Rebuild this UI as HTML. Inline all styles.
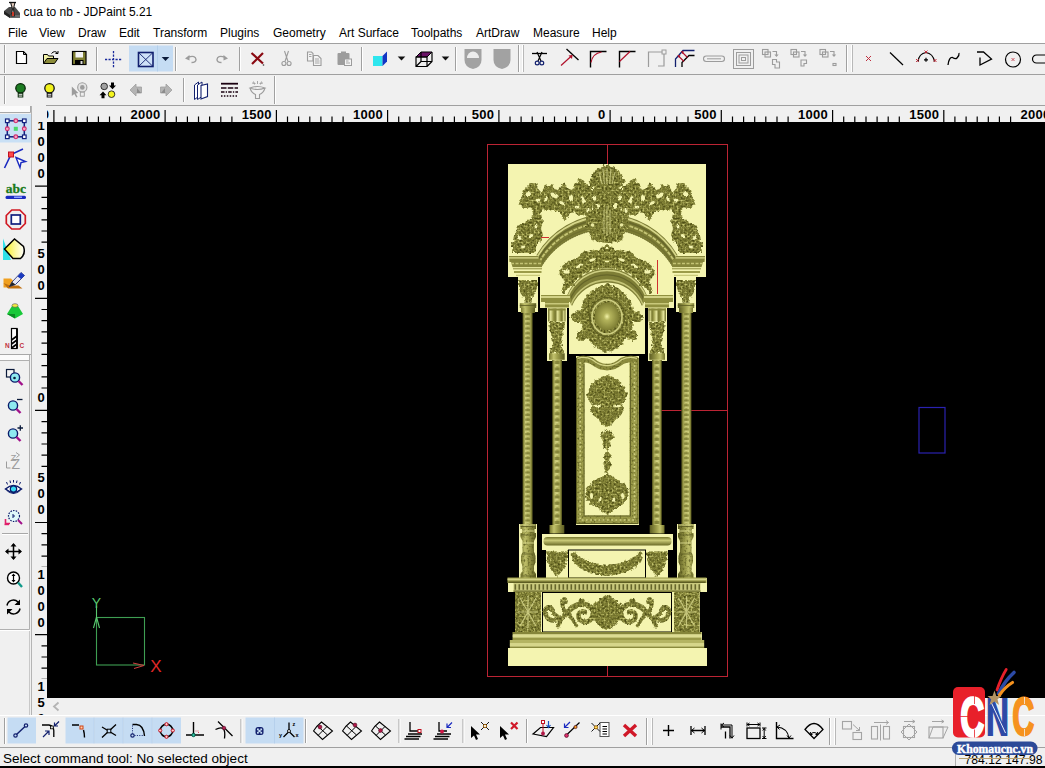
<!DOCTYPE html>
<html><head><meta charset="utf-8"><title>cua to nb - JDPaint 5.21</title>
<style>
html,body{margin:0;padding:0;}
body{width:1045px;height:768px;overflow:hidden;background:#f0f0f0;position:relative;font-family:"Liberation Sans",sans-serif;color:#000;}
.abs{position:absolute;}
#title{left:0;top:0;width:1045px;height:22px;background:#fff;}
#title span{position:absolute;left:23.500px;top:5px;font-size:12px;line-height:14px;white-space:nowrap;}
#menu{left:0;top:22px;width:1045px;height:21px;background:#fff;}
#menu span{position:absolute;top:4px;font-size:12px;line-height:14px;white-space:nowrap;}
#tb1{left:0;top:43px;width:1045px;height:31px;background:#f0f0f0;border-top:1px solid #a0a0a0;box-sizing:border-box;}
#tb2{left:0;top:74px;width:1045px;height:31px;background:#f0f0f0;border-top:1px solid #a0a0a0;box-sizing:border-box;}
#hr{left:46px;top:105px;width:999px;height:17px;background:#f0f0f0;border-top:1px solid #a0a0a0;box-sizing:border-box;}
#vr{left:31px;top:105px;width:16px;height:610px;background:#f0f0f0;}
#left{left:0;top:105px;width:31px;height:610px;background:#f0f0f0;}
#canvas{left:47px;top:122px;width:998px;height:576px;background:#000;}
#hs{left:47px;top:698px;width:998px;height:17px;background:#f0f0f0;}
#tb3{left:0;top:715px;width:1045px;height:32px;background:#f0f0f0;border-top:1px solid #fff;box-sizing:border-box;}
#status{left:0;top:747px;width:1045px;height:21px;background:#f0f0f0;border-top:1px solid #a0a0a0;box-sizing:border-box;}
.rl{position:absolute;top:1px;height:16px;background:#f0f0f0;padding-left:1px;font-weight:bold;font-size:13px;line-height:15px;letter-spacing:0.3px;white-space:nowrap;}
.rv{position:absolute;left:4px;width:12px;background:#f0f0f0;text-align:center;font-weight:bold;font-size:13px;line-height:15px;}
svg{position:absolute;left:0;top:0;overflow:visible;}
</style></head><body>
<div id="title" class="abs"><span>cua to nb - JDPaint 5.21</span></div>
<div id="menu" class="abs">
<span style="left:8px">File</span><span style="left:39px">View</span><span style="left:78px">Draw</span><span style="left:119px">Edit</span><span style="left:153px">Transform</span><span style="left:220px">Plugins</span><span style="left:273px">Geometry</span><span style="left:339px">Art Surface</span><span style="left:411px">Toolpaths</span><span style="left:476px">ArtDraw</span><span style="left:533px">Measure</span><span style="left:592px">Help</span>
</div>
<div id="tb1" class="abs"></div>
<div id="tb2" class="abs"></div>
<div id="left" class="abs"></div>
<div id="vr" class="abs"></div>
<div id="hr" class="abs"></div>
<div id="canvas" class="abs"></div>
<div id="hs" class="abs"></div>
<div id="tb3" class="abs"></div>
<div id="status" class="abs"></div>
<svg id="art" width="1045" height="768" viewBox="0 0 1045 768">
<defs>
<filter id="carve" x="-5%" y="-5%" width="110%" height="110%" color-interpolation-filters="sRGB">
<feTurbulence type="fractalNoise" baseFrequency="0.45" numOctaves="2" seed="7" result="n"/>
<feColorMatrix in="n" type="matrix" values="0 0 0 0 0.30  0 0 0 0 0.30  0 0 0 0 0.08  2.6 0 0 0 -1.05" result="dk"/>
<feComposite in="dk" in2="SourceAlpha" operator="in" result="d2"/>
<feColorMatrix in="n" type="matrix" values="0 0 0 0 0.86  0 0 0 0 0.86  0 0 0 0 0.52  0 2.6 0 0 -1.3" result="lt"/>
<feComposite in="lt" in2="SourceAlpha" operator="in" result="l2"/>
<feMerge><feMergeNode in="SourceGraphic"/><feMergeNode in="d2"/><feMergeNode in="l2"/></feMerge>
</filter>
<filter id="rag" x="-10%" y="-10%" width="120%" height="120%" color-interpolation-filters="sRGB">
<feTurbulence type="fractalNoise" baseFrequency="0.3" numOctaves="2" seed="11" result="t"/>
<feDisplacementMap in="SourceGraphic" in2="t" scale="5" xChannelSelector="R" yChannelSelector="G" result="disp"/>
<feTurbulence type="fractalNoise" baseFrequency="0.5" numOctaves="2" seed="5" result="n"/>
<feColorMatrix in="n" type="matrix" values="0 0 0 0 0.30  0 0 0 0 0.30  0 0 0 0 0.08  2.8 0 0 0 -1.1" result="dk"/>
<feComposite in="dk" in2="disp" operator="in" result="d2"/>
<feColorMatrix in="n" type="matrix" values="0 0 0 0 0.84  0 0 0 0 0.84  0 0 0 0 0.50  0 2.8 0 0 -1.4" result="lt"/>
<feComposite in="lt" in2="disp" operator="in" result="l2"/>
<feMerge><feMergeNode in="disp"/><feMergeNode in="d2"/><feMergeNode in="l2"/></feMerge>
</filter>
<filter id="rag2" x="-10%" y="-10%" width="120%" height="120%" color-interpolation-filters="sRGB">
<feTurbulence type="fractalNoise" baseFrequency="0.3" numOctaves="2" seed="11" result="t"/>
<feDisplacementMap in="SourceGraphic" in2="t" scale="2.600" xChannelSelector="R" yChannelSelector="G" result="disp"/>
<feTurbulence type="fractalNoise" baseFrequency="0.5" numOctaves="2" seed="5" result="n"/>
<feColorMatrix in="n" type="matrix" values="0 0 0 0 0.30  0 0 0 0 0.30  0 0 0 0 0.08  2.8 0 0 0 -1.1" result="dk"/>
<feComposite in="dk" in2="disp" operator="in" result="d2"/>
<feColorMatrix in="n" type="matrix" values="0 0 0 0 0.84  0 0 0 0 0.84  0 0 0 0 0.50  0 2.8 0 0 -1.4" result="lt"/>
<feComposite in="lt" in2="disp" operator="in" result="l2"/>
<feMerge><feMergeNode in="disp"/><feMergeNode in="d2"/><feMergeNode in="l2"/></feMerge>
</filter>
<filter id="hole" x="-20%" y="-20%" width="140%" height="140%">
<feTurbulence type="fractalNoise" baseFrequency="0.3" numOctaves="2" seed="3" result="t"/>
<feDisplacementMap in="SourceGraphic" in2="t" scale="3" xChannelSelector="R" yChannelSelector="G"/>
</filter>
<linearGradient id="colg" x1="0" x2="1" y1="0" y2="0"><stop offset="0" stop-color="#77772e"/><stop offset=".3" stop-color="#c2c26c"/><stop offset=".55" stop-color="#9c9c4a"/><stop offset="1" stop-color="#5c5c22"/></linearGradient>
<linearGradient id="colg2" x1="0" x2="1" y1="0" y2="0"><stop offset="0" stop-color="#4e4e1a"/><stop offset=".12" stop-color="#8a8a3c"/><stop offset=".3" stop-color="#cccc78"/><stop offset=".5" stop-color="#a6a652"/><stop offset=".72" stop-color="#b4b460"/><stop offset=".9" stop-color="#77772e"/><stop offset="1" stop-color="#46461a"/></linearGradient>
<filter id="carve2" x="-5%" y="-5%" width="110%" height="110%" color-interpolation-filters="sRGB">
<feTurbulence type="fractalNoise" baseFrequency="0.5" numOctaves="2" seed="9" result="n"/>
<feColorMatrix in="n" type="matrix" values="0 0 0 0 0.30  0 0 0 0 0.30  0 0 0 0 0.08  2.2 0 0 0 -1.05" result="dk"/>
<feComposite in="dk" in2="SourceAlpha" operator="in" result="d2"/>
<feMerge><feMergeNode in="SourceGraphic"/><feMergeNode in="d2"/></feMerge>
</filter>
<linearGradient id="flute" x1="0" x2="1"><stop offset="0" stop-color="#6e6e2a"/><stop offset=".15" stop-color="#e6e69c"/><stop offset=".3" stop-color="#9a9a48"/><stop offset=".42" stop-color="#77772e"/><stop offset=".55" stop-color="#e6e69c"/><stop offset=".7" stop-color="#a0a04e"/><stop offset=".8" stop-color="#77772e"/><stop offset=".9" stop-color="#dcdc90"/><stop offset="1" stop-color="#6e6e2a"/></linearGradient>
<linearGradient id="rollg" x1="0" x2="0" y1="0" y2="1"><stop offset="0" stop-color="#77772e"/><stop offset=".4" stop-color="#c9c976"/><stop offset="1" stop-color="#6a6a26"/></linearGradient>
<radialGradient id="ball" cx=".5" cy=".5" r=".55"><stop offset="0" stop-color="#f2f2a6"/><stop offset=".25" stop-color="#b4b45c"/><stop offset="1" stop-color="#77772e"/></radialGradient>
</defs>
<!-- red frame -->
<g fill="none" stroke="#bc2434" stroke-width="1" shape-rendering="crispEdges">
<rect x="487.5" y="144.5" width="240" height="532"/>
<path d="M607.5 144.5V164M607.5 665V676.5M661 410.5H727"/>
</g>
<!-- PALE BASE -->
<g fill="#f4f4b0" shape-rendering="crispEdges">
<rect x="508" y="164" width="198" height="113"/>
<rect x="540" y="276" width="134" height="32"/>
<rect x="569" y="300" width="76" height="54"/>
<rect x="518" y="277" width="20" height="35"/><rect x="676" y="277" width="20" height="35"/>
<rect x="547" y="308" width="19.5" height="53"/><rect x="647.5" y="308" width="19.5" height="53"/>
<rect x="575.5" y="355.5" width="63.5" height="169"/>
<rect x="518.5" y="524" width="18.5" height="55"/><rect x="677" y="524" width="18.5" height="55"/>
<rect x="541.5" y="534" width="131" height="16"/>
<rect x="546" y="550" width="122" height="28.5"/>
<rect x="507.5" y="577.5" width="199" height="14"/>
<rect x="514.5" y="591.5" width="185" height="41"/>
<rect x="512.5" y="632" width="189" height="9"/>
<rect x="509.8" y="640" width="194.4" height="8"/>
<rect x="507.5" y="648" width="199" height="17.5"/>
</g>
<!-- COLUMNS -->
<g id="cols">
<g id="colL">
<rect x="522.500" y="312" width="10.200" height="212" fill="url(#colg2)"/>
<path d="M527.600 313V524" stroke="#6c6c28" stroke-width="5" stroke-dasharray="2.200 2.600" opacity="0.550"/>
<path d="M527.600 315.400V524" stroke="#d8d88c" stroke-width="2.400" stroke-dasharray="1.400 3.400" opacity="0.700"/>
</g>
<g id="colI">
<rect x="552.200" y="360" width="9.800" height="165" fill="url(#colg2)"/>
<path d="M557.100 361V525" stroke="#6c6c28" stroke-width="5" stroke-dasharray="3 3.400" opacity="0.600"/>
<path d="M557.100 364.200V525" stroke="#dcdc90" stroke-width="2.600" stroke-dasharray="1.800 4.600" opacity="0.750"/>
</g>
<use href="#colL" transform="translate(1214,0) scale(-1,1)"/>
<use href="#colI" transform="translate(1214,0) scale(-1,1)"/>
</g>
<!-- ARCHES -->
<g fill="none">
 <path d="M536.5 255A81.4 81.4 0 0 1 677.5 255L672.500 266.500A76.5 76.5 0 0 0 541.500 266.500Z" fill="#7c7c34"/>
 <path d="M537.500 256.500A80.300 80.300 0 0 1 676.500 256.500" stroke="#d6d68a" stroke-width="1.600"/>
 <path d="M538.500 259A79.200 79.200 0 0 1 675.500 259" stroke="#66662a" stroke-width="1.400"/>
 <path d="M539.500 261.500A78.300 78.300 0 0 1 674.500 261.500" stroke="#c4c474" stroke-width="1.800" stroke-dasharray="4 1.200"/>
 <path d="M540.500 264.500A77.300 77.300 0 0 1 673.500 264.500" stroke="#707030" stroke-width="1.300"/>
 <path d="M541.500 266.500A76.500 76.500 0 0 1 672.500 266.500" stroke="#5e5e22" stroke-width="0.800" stroke-dasharray="1.500 1"/>
 <!-- inner arch -->
 <path d="M566.800 296A43.200 43.200 0 0 1 647.200 296L642 306A37.800 37.800 0 0 0 572 306Z" fill="#7e7e36"/>
 <path d="M567.800 297A42.200 42.200 0 0 1 646.200 297" stroke="#d0d084" stroke-width="1.500"/>
 <path d="M569.500 301A40 40 0 0 1 644.500 301" stroke="#66662a" stroke-width="1.300"/>
 <path d="M571 304.500A38.800 38.800 0 0 1 643 304.500" stroke="#c4c476" stroke-width="1.600"/>
</g>
<!-- LEFT HALF -->
<g id="half">
 <path d="M509 256H537.500L542 262V267H512.500L511 262H509.500Z" fill="#85853a"/>
 <path d="M509 257.900H538.500" stroke="#e0e094" stroke-width="1.200" fill="none"/>
 <path d="M511 263.500H541" stroke="#c4c474" stroke-width="1.600" stroke-dasharray="3 1.500" fill="none"/>
 <path d="M512.500 267.600H542" stroke="#e4e49c" stroke-width="1.200" fill="none"/>
 <path d="M513 268.800H542" stroke="#8c8c3e" stroke-width="1" fill="none"/>
 <rect x="514" y="271" width="27.500" height="2" fill="#9c9c4a"/>
 <path d="M516 275.300H540" stroke="#b0b05c" stroke-width="0.800" fill="none"/>
 <path d="M519 280H537L537 287L535.500 293L532 298L531.500 302.500H524.500L524 298L520.500 293L519 287Z" fill="#85853a" filter="url(#rag)"/>
 <rect x="519.800" y="303.200" width="16.400" height="4.800" fill="url(#colg)"/><rect x="521" y="308" width="14" height="5" fill="url(#colg)"/><path d="M519.800 305.500H536.200" stroke="#5c5c22" stroke-width="0.800"/>
 <path d="M541 295H570L571.500 302H545V307.500H569V302H541Z" fill="#90903f"/>
 <rect x="541" y="296" width="29" height="2" fill="#d2d286"/>
 <rect x="545" y="303" width="24" height="1.500" fill="#c8c87a"/>
 <rect x="548" y="308.500" width="17.500" height="13" fill="url(#flute)"/><rect x="548" y="308.500" width="17.500" height="2" fill="#8a8a3c"/>
 <path d="M549 322H565L564 330L561.500 338L561 344L563.500 350L564 353H550L550.500 350L553 344L552.500 338L550 330Z" fill="#8a8a3c" filter="url(#rag)"/>
 <rect x="549" y="353.300" width="15.700" height="6.500" fill="url(#colg)"/>
 <rect x="549.500" y="525" width="14.800" height="8.500" fill="url(#colg)"/>
 <g filter="url(#carve2)"><path d="M520.500 524H536V529H534.500V533H536V537L534 541V552L535.500 556V562L534 566V571L536 574V578.500H520.500V574L522.500 571V566L521 562V556L522.500 552V541L520.500 537V533H522V529H520.500Z" fill="url(#colg)"/></g>
 <path d="M520.500 526.500H536M520.500 535H536M522 554H535M521 576H536" stroke="#5c5c22" stroke-width="1" opacity="0.800"/>
 <path d="M521 525H535.500M521.500 531H535M523 543H534" stroke="#dede94" stroke-width="1" opacity="0.800"/>
 <!-- top ornament: scroll mass -->
 <g fill="#87873a" filter="url(#rag)">
  <path d="M520 200L524 190L530 184L536 183L538 190L541 193L545 186L552 185L556 190L562 186L564 182L567 188L572 190L576 184L579 178L584 181L588 186L592 184L592 220L588 218L584 214L580 216L575 212L570 213L566 220L563 219L560 212L552 210L546 211L543 207L541 214L543 222L541 228L543 235L539 242L536 249L535 253H512L512 245L514 236L518 227L525 222L531 219L533 213L531 207L525 208L519 205Z"/>
 </g>
 <g fill="#f4f4b0" filter="url(#hole)">
  <ellipse cx="554.500" cy="195.500" rx="4.500" ry="2.200" transform="rotate(25 554.500 195.500)"/>
  <ellipse cx="528" cy="194" rx="3" ry="1.800" transform="rotate(-20 528 194)"/>
  <ellipse cx="571" cy="198" rx="2" ry="3.500"/>
  <ellipse cx="583" cy="200" rx="1.800" ry="4" transform="rotate(-20 583 200)"/>
  <ellipse cx="538" cy="200" rx="2.500" ry="1.500"/>
  <ellipse cx="523" cy="247" rx="2" ry="1.500"/>
  <ellipse cx="546" cy="199" rx="1.500" ry="3" transform="rotate(20 546 199)"/>
  <ellipse cx="562" cy="203" rx="3" ry="1.500" transform="rotate(30 562 203)"/>
  <ellipse cx="577" cy="207" rx="2.500" ry="1.500"/>
  <ellipse cx="588" cy="210" rx="1.500" ry="3"/>
  <ellipse cx="531" cy="236" rx="2.500" ry="1.500" transform="rotate(-40 531 236)"/>
  <ellipse cx="520" cy="238" rx="1.500" ry="2"/>
  <ellipse cx="536" cy="226" rx="1.500" ry="2.500"/>
 </g>
 <!-- inner arch ornament -->
 <g fill="#87873a" filter="url(#rag)">
  <path d="M607 244.500L601.500 247L599 251L594 249.500L590 252L584 251L580 256L574 259L568 262L562 266L559.500 272L561 278L565 280L563 286L561 293L564 294L567 289L570 288L576 280.500L583 275L591 271L599 269L607 268Z"/>
 </g>
 <g fill="#f4f4b0" filter="url(#hole)">
  <ellipse cx="566.500" cy="271.500" rx="3.200" ry="2.200"/>
  <ellipse cx="579" cy="266" rx="3.500" ry="1.300" transform="rotate(-35 579 266)"/>
  <ellipse cx="592" cy="260" rx="3.500" ry="1.200" transform="rotate(-18 592 260)"/>
 </g>
</g>
<use href="#half" transform="translate(1214,0) scale(-1,1)"/>
<!-- central crest -->
<g fill="#85853a" filter="url(#rag)">
 <path d="M607 165L613 166.500L619 171L623 177L625 183L620 187L622 192L626 198L624 204L620 208L624 212L628 218L628 228L624 234L622 240L616 242L607 243L598 242L592 240L590 234L586 228L586 218L590 212L594 208L590 204L588 198L592 192L594 187L589 183L591 177L595 171L601 166.500Z"/>
</g>
<g fill="#f4f4b0" filter="url(#hole)">
 <ellipse cx="594.500" cy="198" rx="1.800" ry="2.500"/><ellipse cx="619.500" cy="198" rx="1.800" ry="2.500"/>
 <ellipse cx="598.500" cy="206" rx="1.500" ry="3" transform="rotate(-20 598.500 206)"/><ellipse cx="615.500" cy="206" rx="1.500" ry="3" transform="rotate(20 615.500 206)"/>
</g>
<g stroke="#d8d890" stroke-width="0.900" fill="none" opacity="0.850">
 <path d="M607 168V184M603 169L604.500 184M611 169L609.500 184M599 172L602 184M615 172L612 184M607 206V236M604 210V234M610 210V234"/>
</g>
<circle cx="592.500" cy="225" r="1.800" fill="#e8e8a0"/><circle cx="621.500" cy="225" r="1.800" fill="#e8e8a0"/>
<!-- medallion -->
<g>
 <g fill="#87873a" filter="url(#rag)">
  <path d="M607 284L613 286L619 289L626 294L631 302L633 310L639 312L644 317L640 322L633 322L632 330L637 333L637 339L632 341L627 338L621 345L613 350L607 353L601 350L593 345L587 338L582 341L577 339L577 333L582 330L581 322L574 322L570 317L575 312L581 310L583 302L588 294L595 289L601 286Z"/>
 </g>
 <ellipse cx="607" cy="317" rx="17.500" ry="19.500" fill="none" stroke="#5e5e22" stroke-width="1.200"/>
 <ellipse cx="607" cy="317" rx="15" ry="17" fill="none" stroke="#cdcd80" stroke-width="1.600"/>
 <ellipse cx="607" cy="316.500" rx="12" ry="13.800" fill="url(#ball)"/>
</g>
<!-- CENTER TALL PANEL -->
<g>
 <g filter="url(#carve2)">
 <path d="M576 358H584.500V515.500H629.500V358H638.500V524H576Z" fill="#9c9c4a"/>
 <path d="M577.500 360Q585 357.500 592 361Q600 367.500 607 367Q614 367.500 622 361Q629 357.500 637 360" fill="none" stroke="#8c8c3e" stroke-width="6.500"/>
 </g>
 <path d="M576.500 358V523.500H638V358" fill="none" stroke="#5e5e22" stroke-width="1"/>
 <path d="M584 364V516H630.500V364" fill="none" stroke="#66662a" stroke-width="1"/>
 <path d="M580.200 362V520H634.500V362" fill="none" stroke="#d6d68a" stroke-width="1.600" stroke-dasharray="1.800 2.400" opacity="0.850"/>
 <path d="M577.500 358.500Q585 356 592 359.500Q600 366 607 365.500Q614 366 622 359.500Q629 356 637 358.500" fill="none" stroke="#d6d68a" stroke-width="1.200"/>
 <g fill="#87873a" filter="url(#rag)">
  <path d="M607 375L613 377L619 381L624 387L627 394L626 400L622 404L624 409L621 415L616 419L612 424L607 428L602 424L598 419L593 415L590 409L592 404L588 400L587 394L590 387L595 381L601 377Z"/>
  <path d="M607 429L612 433L614 437L610 441L611 446L607 450L603 446L604 441L600 437L602 433Z"/>
  <path d="M607 451L611 455L609 460L611 465L609 470L607 474L605 470L603 465L605 460L603 455Z"/>
  <path d="M607 474L613 477L620 481L626 486L629 493L627 500L622 505L615 509L607 514.500L599 509L592 505L587 500L585 493L588 486L594 481L601 477Z"/>
 </g>
 <g fill="#f4f4b0" filter="url(#hole)">
  <ellipse cx="597" cy="406" rx="4" ry="1.300"/><ellipse cx="617" cy="406" rx="4" ry="1.300"/>
  <ellipse cx="591.500" cy="496" rx="1.500" ry="3"/><ellipse cx="622.500" cy="496" rx="1.500" ry="3"/>
  <ellipse cx="600" cy="500" rx="1.200" ry="2.500" transform="rotate(25 600 500)"/><ellipse cx="614" cy="500" rx="1.200" ry="2.500" transform="rotate(-25 614 500)"/>
 </g>
</g>
<!-- LOWER PART -->
<g>
 <rect x="543.5" y="537" width="128" height="8.5" rx="4" fill="url(#rollg)"/>
 <g fill="#87873a" filter="url(#rag)">
  <path d="M546.500 551.500H567.500L567 558L565.500 565L562 571L557 577L552 571L548.500 565L547 558Z"/>
  <path d="M646.500 551.500H667.500L667 558L665.500 565L662 571L657 577L652 571L648.500 565L647 558Z"/>
  <path d="M571.500 554L575 551.500L579 556L585 560L595 563.500L607 565L619 563.500L629 560L635 556L639 551.500L642.500 554L641 561L636 567L627 571.500L617 574.500L607 576L597 574.500L587 571.500L578 567L573 561Z"/>
 </g>
 <rect x="568.5" y="550" width="77" height="28" fill="none" stroke="#000" stroke-width="1"/>
 <!-- dentil cornice -->
 <rect x="507.500" y="577.500" width="199" height="5.500" fill="#9a9a48"/>
 <rect x="507.500" y="578.500" width="199" height="1.800" fill="#d4d488"/>
 <rect x="508.500" y="581.500" width="197" height="1.500" fill="#5e5e22"/>
 <rect x="513.500" y="583" width="187" height="8.500" fill="#c9c97c"/>
 <path d="M514.500 587H700" stroke="#66662a" stroke-width="5.500" stroke-dasharray="1.600 2.400" fill="none"/>
 <rect x="513.500" y="590.500" width="187" height="1.300" fill="#6a6a2a"/>
 <!-- side pedestals -->
 <rect x="515" y="592" width="26" height="40" fill="#87873a" filter="url(#carve)"/>
 <rect x="674" y="592" width="25.5" height="40" fill="#87873a" filter="url(#carve)"/>
 <g stroke="#d6d68c" stroke-width="1.200" opacity="0.800">
  <path d="M528 596V628M518 612H538M520 598L536 626M536 598L520 626"/>
  <path d="M686.500 596V628M676.500 612H696.500M678.500 598L694.500 626M694.500 598L678.500 626"/>
 </g>
 <!-- middle panel -->
 <rect x="542.5" y="592.5" width="129" height="39.5" fill="#f4f4b0" stroke="#000" stroke-width="1"/>
 <g id="mp">
 <g fill="#87873a" filter="url(#rag)">
  <path d="M607 594.500L613 598L619 603L622 610L621 618L617 624L612 628L607 630L602 628L597 624L593 618L592 610L595 603L601 598Z"/>
 </g>
 <g id="mps" fill="none" stroke="#85853a" stroke-linecap="round" filter="url(#rag2)">
  <path d="M552.500 610.500Q551 606.500 547.500 607.500Q544.500 609 545.500 614Q547 620.500 555 620.500Q562 620 566 614" stroke-width="4.600"/>
  <path d="M566 614Q562.500 608 562 603Q561.500 599 564.500 599Q567 600 565.500 603" stroke-width="3.600"/>
  <path d="M565 615Q572 605 582 604Q591 605 593.500 611" stroke-width="5.600"/>
  <path d="M593 613Q592 622 584.500 622Q578 621 578.500 615Q580 610 585 612" stroke-width="4.600"/>
  <path d="M580.500 604Q579 600.500 581.500 599.500Q584 600 582.500 602.500" stroke-width="3"/>
  <path d="M561 620Q559 624 557.500 627M571.500 617.500Q574 622 576.500 625.500M553 613L558 616.500M569 612L571 618" stroke-width="3.400"/>
 </g>
 <use href="#mps" transform="translate(1214,0) scale(-1,1)"/>
 </g>
 <!-- base molding -->
 <rect x="512.500" y="632" width="189" height="2.500" fill="#85853a"/>
 <rect x="512.500" y="634.500" width="189" height="3" fill="#dcdc92"/>
 <rect x="512.500" y="637.500" width="189" height="2.500" fill="#9a9a48"/>
 <rect x="509.800" y="640" width="194.400" height="3.500" fill="#b4b462"/>
 <rect x="509.800" y="643.500" width="194.400" height="3" fill="#d6d68a"/>
 <rect x="509.800" y="646.500" width="194.400" height="1.500" fill="#8a8a3c"/>
</g>

</svg>

<svg width="1045" height="768" viewBox="0 0 1045 768" style="pointer-events:none">
<g stroke="#000" stroke-width="1.2" fill="none">
<path d="M53.9 110V122M65.0 116.5V122M76.1 116.5V122M87.3 116.5V122M98.4 116.5V122M109.5 116.5V122M120.6 116.5V122M131.8 116.5V122M142.9 116.5V122M154.0 116.5V122M165.1 110V122M176.3 116.5V122M187.4 116.5V122M198.5 116.5V122M209.6 116.5V122M220.8 116.5V122M231.9 116.5V122M243.0 116.5V122M254.1 116.5V122M265.3 116.5V122M276.4 110V122M287.5 116.5V122M298.6 116.5V122M309.8 116.5V122M320.9 116.5V122M332.0 116.5V122M343.1 116.5V122M354.2 116.5V122M365.4 116.5V122M376.5 116.5V122M387.6 110V122M398.7 116.5V122M409.9 116.5V122M421.0 116.5V122M432.1 116.5V122M443.2 116.5V122M454.4 116.5V122M465.5 116.5V122M476.6 116.5V122M487.7 116.5V122M498.9 110V122M510.0 116.5V122M521.1 116.5V122M532.2 116.5V122M543.4 116.5V122M554.5 116.5V122M565.6 116.5V122M576.7 116.5V122M587.9 116.5V122M599.0 116.5V122M610.1 110V122M621.2 116.5V122M632.3 116.5V122M643.5 116.5V122M654.6 116.5V122M665.7 116.5V122M676.8 116.5V122M688.0 116.5V122M699.1 116.5V122M710.2 116.5V122M721.3 110V122M732.5 116.5V122M743.6 116.5V122M754.7 116.5V122M765.8 116.5V122M777.0 116.5V122M788.1 116.5V122M799.2 116.5V122M810.3 116.5V122M821.5 116.5V122M832.6 110V122M843.7 116.5V122M854.8 116.5V122M866.0 116.5V122M877.1 116.5V122M888.2 116.5V122M899.3 116.5V122M910.4 116.5V122M921.6 116.5V122M932.7 116.5V122M943.8 110V122M954.9 116.5V122M966.1 116.5V122M977.2 116.5V122M988.3 116.5V122M999.4 116.5V122M1010.6 116.5V122M1021.7 116.5V122M1032.8 116.5V122M1043.9 116.5V122M41.5 130.2H47M41.5 141.4H47M41.5 152.6H47M41.5 163.8H47M41.5 175.0H47M35 186.2H47M41.5 197.4H47M41.5 208.6H47M41.5 219.8H47M41.5 231.0H47M41.5 242.2H47M41.5 253.5H47M41.5 264.7H47M41.5 275.9H47M41.5 287.1H47M35 298.3H47M41.5 309.5H47M41.5 320.7H47M41.5 331.9H47M41.5 343.1H47M41.5 354.3H47M41.5 365.6H47M41.5 376.8H47M41.5 388.0H47M41.5 399.2H47M35 410.4H47M41.5 421.6H47M41.5 432.8H47M41.5 444.0H47M41.5 455.2H47M41.5 466.4H47M41.5 477.7H47M41.5 488.9H47M41.5 500.1H47M41.5 511.3H47M35 522.5H47M41.5 533.7H47M41.5 544.9H47M41.5 556.1H47M41.5 567.3H47M41.5 578.5H47M41.5 589.8H47M41.5 601.0H47M41.5 612.2H47M41.5 623.4H47M35 634.6H47M41.5 645.8H47M41.5 657.0H47M41.5 668.2H47M41.5 679.4H47M41.5 690.6H47M41.5 701.9H47M41.5 713.1H47"/>
</g></svg>
<div class="abs" style="left:47px;top:106px;width:998px;height:16px;overflow:hidden">
<span class="rl" style="right:995.6px">2500</span>
<span class="rl" style="right:884.4px">2000</span>
<span class="rl" style="right:773.1px">1500</span>
<span class="rl" style="right:661.9px">1000</span>
<span class="rl" style="right:550.6px">500</span>
<span class="rl" style="right:439.4px">0</span>
<span class="rl" style="right:328.2px">500</span>
<span class="rl" style="right:216.9px">1000</span>
<span class="rl" style="right:105.7px">1500</span>
<span class="rl" style="right:-5.6px">2000</span>
</div>
<div class="abs" style="left:31px;top:122px;width:16px;height:593px;overflow:hidden">
<span class="rv" style="top:-3.9px">1</span>
<span class="rv" style="top:12.1px">0</span>
<span class="rv" style="top:28.1px">0</span>
<span class="rv" style="top:44.1px">0</span>
<span class="rv" style="top:124.2px">5</span>
<span class="rv" style="top:140.2px">0</span>
<span class="rv" style="top:156.2px">0</span>
<span class="rv" style="top:268.3px">0</span>
<span class="rv" style="top:348.4px">5</span>
<span class="rv" style="top:364.4px">0</span>
<span class="rv" style="top:380.4px">0</span>
<span class="rv" style="top:444.5px">1</span>
<span class="rv" style="top:460.5px">0</span>
<span class="rv" style="top:476.5px">0</span>
<span class="rv" style="top:492.5px">0</span>
<span class="rv" style="top:556.6px">1</span>
<span class="rv" style="top:572.6px">5</span>
<span class="rv" style="top:588.6px">0</span>
<span class="rv" style="top:604.6px">0</span>
</div><svg width="1045" height="768" viewBox="0 0 1045 768" fill="none">
<path d="M4.5 45V73M4.5 76V104" stroke="#a0a0a0" stroke-width="1"/><path d="M5.5 45V73M5.5 76V104" stroke="#fff" stroke-width="1"/>
<g transform="translate(21.5,57.5)"><path d="M-5 -6H2L5 -3V6H-5Z" fill="#fff" stroke="#000" stroke-width="1.2"/><path d="M2 -6V-3H5" fill="none" stroke="#000" stroke-width="1"/></g>
<g transform="translate(50.5,57.5)"><path d="M-7 6V-3H-3L-2 -1.500H3V1" fill="#f1f1a8" stroke="#000" stroke-width="1"/><path d="M-7 6L-3.500 1H7.500L4 6Z" fill="#8c8c3a" stroke="#000" stroke-width="1"/><path d="M1 -4Q4 -7.500 7 -4.500M7.500 -6.500V-4H5" fill="none" stroke="#000" stroke-width="1"/></g>
<g transform="translate(79,58)"><rect x="-6.500" y="-6.500" width="13.500" height="13" fill="#7e7e32" stroke="#000" stroke-width="1.2"/><rect x="-3.500" y="-6" width="7.500" height="5.500" fill="#f4f4f4"/><rect x="-4" y="2" width="8.500" height="4.500" fill="#000"/><rect x="1.500" y="3" width="2" height="3" fill="#ddd"/></g>
<path d="M96.5 47V71" stroke="#a0a0a0" stroke-width="1"/><path d="M97.5 47V71" stroke="#fff" stroke-width="1"/>
<g transform="translate(113.5,59.5)"><path d="M-8.500 0H8.500M0 -8.500V8.500" stroke="#1a2a9c" stroke-width="1.3" stroke-dasharray="2.2 1.3" fill="none"/></g>
<rect x="129" y="45.500" width="44" height="26" fill="#c5dcf3"/><path d="M157.500 45.500V71.500" stroke="#b4d0ec" stroke-width="1"/>
<g transform="translate(145.5,59.5)"><rect x="-7" y="-7" width="14.500" height="14" fill="#cfe2f8" stroke="#12206e" stroke-width="1.600"/><path d="M-7 -7L7.500 7M7.500 -7L-7 7" stroke="#12206e" stroke-width="0.900"/></g>
<g transform="translate(165.5,59)"><path d="M-3.800 -2H3.800L0 2Z" fill="#0a1a3a"/></g>
<path d="M175.5 47V71" stroke="#a0a0a0" stroke-width="1"/><path d="M176.5 47V71" stroke="#fff" stroke-width="1"/>
<g transform="translate(191,59.5)"><path d="M-2.500 -2.500Q4.500 -4.500 5 0Q5 3 0.500 3" fill="none" stroke="#9c9c9c" stroke-width="1.400"/><path d="M-6 -1L-1.500 -4.500L-1.500 1Z" fill="#9c9c9c"/></g>
<g transform="translate(222,59.5)"><path d="M2.500 -2.500Q-4.500 -4.500 -5 0Q-5 3 -0.500 3" fill="none" stroke="#9c9c9c" stroke-width="1.400"/><path d="M6 -1L1.500 -4.500L1.500 1Z" fill="#9c9c9c"/></g>
<path d="M239.5 47V71" stroke="#a0a0a0" stroke-width="1"/><path d="M240.5 47V71" stroke="#fff" stroke-width="1"/>
<g transform="translate(257.5,58.5)"><path d="M-6 -5.500L5.500 5M5.500 -5.500L-5.500 5.500" stroke="#8a0a12" stroke-width="2.200" fill="none"/><circle cx="6" cy="6.500" r="0.800" fill="#333"/></g>
<g transform="translate(286.5,58.5)"><path d="M-2 -7.500L1.500 3M2 -7.500L-1.500 3" stroke="#9c9c9c" stroke-width="1.100" fill="none"/><circle cx="-2.600" cy="5" r="2" fill="none" stroke="#9c9c9c" stroke-width="1.100"/><circle cx="2.600" cy="5" r="2" fill="none" stroke="#9c9c9c" stroke-width="1.100"/></g>
<g transform="translate(314.5,59)"><path d="M-7 -7H-3L-1.500 -5.500V2H-7Z" fill="#f4f4f4" stroke="#9c9c9c" stroke-width="1.100"/><path d="M-1 -3.500H3.500L6.500 -0.500V6.500H-1Z" fill="#f4f4f4" stroke="#9c9c9c" stroke-width="1.100"/><path d="M-5.500 -4.500H-3M-5.500 -2.500H-3M0.500 0H4.500M0.500 2H5M0.500 4H5" stroke="#9c9c9c" stroke-width="0.900"/></g>
<g transform="translate(344.5,59)"><rect x="-7" y="-6" width="12" height="12" rx="1" fill="#9c9c9c"/><rect x="-3.500" y="-7.500" width="5" height="2.500" fill="#9c9c9c"/><rect x="0" y="0" width="7" height="6.500" fill="#f4f4f4" stroke="#9c9c9c" stroke-width="1"/><path d="M1.500 2H4M1.500 4H5.500" stroke="#9c9c9c" stroke-width="0.900"/></g>
<path d="M361.5 47V71" stroke="#a0a0a0" stroke-width="1"/><path d="M362.5 47V71" stroke="#fff" stroke-width="1"/>
<g transform="translate(380,59)"><rect x="-7" y="-3" width="9.500" height="10" fill="#2ee6ee"/><path d="M2.500 -3L7 -7.500V2.500L2.500 7Z" fill="#1236c4"/></g>
<g transform="translate(401.5,58.5)"><path d="M-3.800 -2H3.800L0 2Z" fill="#111"/></g>
<g transform="translate(424,59.5)"><path d="M-8 -2.500L-3 -7.500H8L3 -2.500Z" fill="#6a1266" stroke="#000" stroke-width="1"/><path d="M-8 -2.500H3V7H-8ZM3 7L8 2V-7.500M-3 -7.500V2H8M-3 2L-8 7" fill="none" stroke="#000" stroke-width="1.200"/></g>
<g transform="translate(445.5,58.5)"><path d="M-3.800 -2H3.800L0 2Z" fill="#111"/></g>
<path d="M455.5 47V71" stroke="#a0a0a0" stroke-width="1"/><path d="M456.5 47V71" stroke="#fff" stroke-width="1"/>
<g transform="translate(473,59)"><path d="M-8.500 -10H8.500V1Q8.500 8 0 10Q-8.500 8 -8.500 1Z" fill="#a2a2a2"/><path d="M-6 -1A6 6.500 0 0 1 6 -1Z" fill="#ececec"/></g>
<g transform="translate(502,59)"><path d="M-8.500 -10H8.500V1Q8.500 8 0 10Q-8.500 8 -8.500 1Z" fill="#a2a2a2"/></g>
<path d="M518.500 45V72" stroke="#a0a0a0"/><path d="M519.500 45V72" stroke="#fff"/><path d="M522.500 45V72" stroke="#fff"/><path d="M523.500 45V72" stroke="#b8b8b8"/>
<g transform="translate(539.5,59)"><path d="M-7.500 -5.500H7.500" stroke="#000" stroke-width="1.300"/><path d="M-2.500 -7L1.500 2M2.500 -7L-1.500 2" stroke="#000" stroke-width="1.200" fill="none"/><circle cx="-2.300" cy="4" r="1.900" fill="none" stroke="#12206e" stroke-width="1.200"/><circle cx="2.300" cy="4" r="1.900" fill="none" stroke="#12206e" stroke-width="1.200"/></g>
<g transform="translate(570,58)"><path d="M-3.500 -9L8.500 2" stroke="#000" stroke-width="1.300"/><path d="M-9 7.500L2 -2.500" stroke="#b0102a" stroke-width="1.200"/><path d="M2.500 -3L-1.500 -2.500L2 1Z" fill="#b0102a"/></g>
<g transform="translate(598.5,59.5)"><path d="M-8 8V-8H8" fill="none" stroke="#000" stroke-width="1.400"/><path d="M-7.500 3Q-6 -6 3 -7.500" fill="none" stroke="#b0102a" stroke-width="1.200"/></g>
<g transform="translate(627.5,59.5)"><path d="M-8 8V-8H8" fill="none" stroke="#000" stroke-width="1.400"/><path d="M-8 2L2.500 -8" fill="none" stroke="#b0102a" stroke-width="1.200"/></g>
<g transform="translate(657,59)"><path d="M-8.500 8V-7H5.500M7 -5V7H1" fill="none" stroke="#9c9c9c" stroke-width="1.200"/><rect x="5" y="-9" width="4" height="4" fill="none" stroke="#9c9c9c" stroke-width="1"/></g>
<g transform="translate(685,59)"><path d="M-9.500 8V0L-2 -8.500H9.500" fill="none" stroke="#12206e" stroke-width="1.300"/><path d="M-3 8V3.500L4 -3.500H9.500" fill="none" stroke="#000" stroke-width="1.300"/><path d="M-6.500 -3L-1 2.500M-3 -7L2.500 -1.500" stroke="#b0102a" stroke-width="1.100"/><path d="M-7.500 -4L-4.500 -3.500L-6 -1ZM-4 -8L-1 -7.500L-2.500 -5Z" fill="#b0102a"/></g>
<g transform="translate(714,58.5)"><rect x="-10.500" y="-2.500" width="21" height="5.500" rx="2.700" fill="none" stroke="#9c9c9c" stroke-width="1.100"/><path d="M-7 0.300H7" stroke="#9c9c9c" stroke-width="1"/></g>
<g transform="translate(743.5,59)"><rect x="-10" y="-9.500" width="20" height="19" fill="none" stroke="#9c9c9c"/><rect x="-7" y="-6.500" width="14" height="13" fill="none" stroke="#9c9c9c"/><rect x="-4.500" y="-4" width="9" height="8" fill="none" stroke="#9c9c9c"/><rect x="-2" y="-1.500" width="4" height="3" fill="none" stroke="#9c9c9c"/></g>
<g transform="translate(771.5,59)"><rect x="-9" y="-9.500" width="5.500" height="5" fill="none" stroke="#9c9c9c" stroke-width="1.100"/><rect x="-6.500" y="-7" width="5.500" height="5" fill="none" stroke="#9c9c9c" stroke-width="1.100"/><path d="M1 -7.500H5V-3" fill="none" stroke="#9c9c9c" stroke-width="1.100"/><path d="M2.800 -4.500H7.200L5 -2Z" fill="#9c9c9c"/><path d="M1 0.500H5V3H8V9H3.500V5.500H1Z" fill="none" stroke="#9c9c9c" stroke-width="1.100"/></g>
<g transform="translate(800,59)"><rect x="-9" y="-9.500" width="5.500" height="5" fill="none" stroke="#9c9c9c" stroke-width="1.100"/><rect x="-6.500" y="-7" width="5.500" height="5" fill="none" stroke="#9c9c9c" stroke-width="1.100"/><path d="M1 -7.500H5V-3" fill="none" stroke="#9c9c9c" stroke-width="1.100"/><path d="M2.800 -4.500H7.200L5 -2Z" fill="#9c9c9c"/><path d="M1 1H6.500V4.500H4V7H1Z" fill="none" stroke="#9c9c9c" stroke-width="1.100"/></g>
<g transform="translate(829,59)"><rect x="-9" y="-9.500" width="5.500" height="5" fill="none" stroke="#9c9c9c" stroke-width="1.100"/><rect x="-6.500" y="-7" width="5.500" height="5" fill="none" stroke="#9c9c9c" stroke-width="1.100"/><path d="M1 -7.500H5V-3" fill="none" stroke="#9c9c9c" stroke-width="1.100"/><path d="M2.800 -4.500H7.200L5 -2Z" fill="#9c9c9c"/><rect x="4" y="4.500" width="3" height="2" fill="none" stroke="#9c9c9c" stroke-width="1.100"/></g>
<path d="M846.500 45V72" stroke="#a0a0a0"/><path d="M847.500 45V72" stroke="#fff"/><path d="M851.500 45V72" stroke="#fff"/><path d="M852.500 45V72" stroke="#b8b8b8"/>
<g transform="translate(868.5,58.5)"><path d="M-2.500 -2.500L2.500 2.500M2.500 -2.500L-2.500 2.500" stroke="#c03040" stroke-width="1"/></g>
<g transform="translate(896.5,59)"><path d="M-6.500 -6.500L6.500 6" stroke="#000" stroke-width="1.200"/></g>
<g transform="translate(926,59)"><path d="M-8 2.500Q-7 -5.500 0 -6.500Q7 -5.500 8.500 2.500" fill="none" stroke="#000" stroke-width="1.200"/><path d="M-2 0.800H2M0 -1.200V2.800" stroke="#000" stroke-width="1.200"/><path d="M-10 0L-7 3M-7 0L-10 3M-1.500 -8.500L1.500 -5.500M1.500 -8.500L-1.500 -5.500M7.500 0L10.500 3M10.500 0L7.500 3" stroke="#c02030" stroke-width="0.900"/></g>
<g transform="translate(954,59.5)"><path d="M-6 5.500Q-5 -2.500 -1.500 -2Q1.500 0 3 -1.500Q5.500 -4 5 -6.500" fill="none" stroke="#000" stroke-width="1.300"/></g>
<g transform="translate(984.5,59)"><path d="M-7.500 -7H-1L7 0L-4.500 6V-1.500" fill="none" stroke="#000" stroke-width="1.300"/></g>
<g transform="translate(1013,59.5)"><circle r="7.500" fill="none" stroke="#000" stroke-width="1.200"/><path d="M-1.500 -1.500L1.500 1.500M1.500 -1.500L-1.500 1.500" stroke="#c03040" stroke-width="0.800"/></g>
<g transform="translate(1043,59)"><rect x="-10.500" y="-4" width="30" height="8" rx="4" fill="none" stroke="#000" stroke-width="1.200"/></g>
<g transform="translate(20.5,88.3)"><circle r="4.700" fill="#1c7c22" stroke="#0a2a0a" stroke-width="1.300"/><rect x="-2.300" y="5" width="4.600" height="3.700" fill="#fff" stroke="#0a2a0a" stroke-width="1"/><path d="M-2.300 6.900H2.300" stroke="#0a2a0a" stroke-width="0.800"/></g>
<g transform="translate(49.5,88.3)"><circle r="4.700" fill="#f2f21c" stroke="#111" stroke-width="1.300"/><rect x="-2.300" y="5" width="4.600" height="3.700" fill="#fff" stroke="#111" stroke-width="1"/><path d="M-2.300 6.900H2.300" stroke="#111" stroke-width="0.800"/></g>
<g transform="translate(82.3,87.4)"><circle r="4.600" fill="#e4e4e4" stroke="#9c9c9c" stroke-width="1.100"/><circle r="2.300" fill="#9c9c9c"/><rect x="-2" y="4.800" width="4" height="4" fill="#eee" stroke="#9c9c9c" stroke-width="0.900"/><path d="M-10.500 -1V8.500L-8 6.500L-6 10L-4.800 9.300L-6.500 6L-4 5.500Z" fill="#9c9c9c"/></g>
<g transform="translate(108,90)"><circle cx="-3.800" cy="-3.600" r="3.300" fill="#a0a0a0" stroke="#222" stroke-width="0.900"/><circle cx="3.500" cy="4.200" r="3.300" fill="#f4f41e" stroke="#222" stroke-width="0.900"/><path d="M3 -7.500H6V-4.500H8L4.500 -0.800L1 -4.500H3Z" fill="#000"/><path d="M-3.500 8.300H-6.500V5.300H-8.500L-5 1.600L-1.500 5.300H-3.500Z" fill="#000"/></g>
<g transform="translate(136,90)"><path d="M-6 0L0 -6V-3H5.500V3H0V6Z" fill="#b4b4b4" stroke="#a0a0a0" stroke-width="0.800"/><path d="M1 -2L5 3H1Z" fill="#8c8c8c"/></g>
<g transform="translate(166,90)"><path d="M6 0L0 -6V-3H-5.500V3H0V6Z" fill="#b4b4b4" stroke="#a0a0a0" stroke-width="0.800"/><path d="M-1 -2L-5 3H-1Z" fill="#8c8c8c"/></g>
<path d="M183.5 78V102" stroke="#a0a0a0" stroke-width="1"/><path d="M184.5 78V102" stroke="#fff" stroke-width="1"/>
<g transform="translate(201,90.5)"><path d="M-6.500 -5.500L-2.500 -8.500V6L-6.500 9Z" fill="#fff" stroke="#12206e" stroke-width="1"/><path d="M-3.500 -5.500L1 -8.500V6L-3.500 9Z" fill="#fff" stroke="#12206e" stroke-width="1"/><path d="M0 -5L6.500 -6.500V6L0 8.500Z" fill="#fff" stroke="#12206e" stroke-width="1.100"/></g>
<g transform="translate(229.5,90)"><path d="M-8.500 -6.300H8.500" stroke="#1a0010" stroke-width="1.800"/><path d="M-8.500 -2H8.500" stroke="#1a0010" stroke-width="1.600" stroke-dasharray="5.500 1.300"/><path d="M-8.500 2H8.500" stroke="#1a0010" stroke-width="1.600" stroke-dasharray="3.500 1.200 1.300 1.200"/><path d="M-8.500 6H8.500" stroke="#1a0010" stroke-width="1.600" stroke-dasharray="1.500 1.400"/></g>
<g transform="translate(257.5,90)"><path d="M-7.500 -2Q0 -5 7.500 -2Q0 1 -7.500 -2ZM-7.500 -2Q-6 3 -2 4.500V8.500H2V4.500Q6 3 7.500 -2" fill="#f2f2f2" stroke="#9c9c9c" stroke-width="1.100"/><path d="M-4 -8.500L-3 -5.500M0 -9V-6M4 -8.500L3 -5.500M-5.500 -7L-2 -6.500M5.500 -7L2 -6.500" stroke="#9c9c9c" stroke-width="0.900"/></g>
<path d="M274.500 76V104" stroke="#a0a0a0"/><path d="M275.500 76V104" stroke="#fff"/>
</svg>
<svg width="1045" height="768" viewBox="0 0 1045 768" fill="none">
<rect x="0" y="106" width="30" height="6" fill="#fbfbfb"/><path d="M0 112.500H30.500V106" stroke="#a8a8a8" fill="none"/>
<path d="M31.500 106V715" stroke="#b4b4b4"/>
<path d="M0 354.500H31" stroke="#a8a8a8"/><rect x="0" y="355" width="29.500" height="5.500" fill="#fbfbfb"/><path d="M0 360.500H29.500V355M29.500 360V534" stroke="#b0b0b0" fill="none"/>
<path d="M2 533.500H28" stroke="#a8a8a8"/><path d="M2 534.500H28" stroke="#fff"/>
<path d="M0 629.500H29.500V534" stroke="#b0b0b0" fill="none"/><path d="M0 630.500H30" stroke="#fff"/><path d="M29.500 631V715" stroke="#c8c8c8"/>
<rect x="0" y="114" width="31" height="28.500" fill="#c9e0f5"/>
<g transform="translate(15.8,128.8)"><rect x="-8.500" y="-8" width="17" height="16" fill="none" stroke="#12207e" stroke-width="1.500"/><rect x="-10.3" y="-9.8" width="3.600" height="3.600" fill="#fff" stroke="#12207e" stroke-width="1.200"/><rect x="6.7" y="-9.8" width="3.600" height="3.600" fill="#fff" stroke="#12207e" stroke-width="1.200"/><rect x="-10.3" y="6.2" width="3.600" height="3.600" fill="#fff" stroke="#12207e" stroke-width="1.200"/><rect x="6.7" y="6.2" width="3.600" height="3.600" fill="#fff" stroke="#12207e" stroke-width="1.200"/><circle cx="0" cy="-8" r="1.900" fill="#f7a8c4" stroke="#d02a6a" stroke-width="1.100"/><circle cx="0" cy="8" r="1.900" fill="#f7a8c4" stroke="#d02a6a" stroke-width="1.100"/><circle cx="-8.5" cy="0" r="1.900" fill="#f7a8c4" stroke="#d02a6a" stroke-width="1.100"/><circle cx="8.5" cy="0" r="1.900" fill="#f7a8c4" stroke="#d02a6a" stroke-width="1.100"/><rect x="-2" y="-2" width="4" height="4" fill="#4ad86a"/></g>
<g transform="translate(15,159)"><path d="M-10.500 9L-4 -4.500L8 -10" fill="none" stroke="#1a2ac0" stroke-width="1.600"/><rect x="-6.500" y="-7" width="5" height="5" fill="#ff4a4a" stroke="#c01020" stroke-width="1"/><path d="M1 -1.500L10.500 2.500L6 3.500L5 8.500Z" fill="#fff" stroke="#1a2ac0" stroke-width="1.400"/></g>
<text x="15.800" y="193" text-anchor="middle" font-family="Liberation Serif,serif" font-weight="bold" font-size="13.500" fill="#1a7a1a" stroke="#1a7a1a" stroke-width="0.300">abc</text>
<rect x="5.500" y="195.800" width="20.500" height="3.200" rx="1.500" fill="#1a2ac0"/><rect x="14" y="196.500" width="8" height="1.500" fill="#8aa0ff"/>
<g transform="translate(15.8,219.5)"><path d="M-4 -9.500H4L9.500 -4V4L4 9.500H-4L-9.500 4V-4Z" fill="none" stroke="#d01822" stroke-width="1.700"/><rect x="-4.500" y="-4.500" width="9" height="9" fill="#fff" stroke="#12207e" stroke-width="1.700"/></g>
<defs><linearGradient id="ylw" x1="0" x2="1"><stop offset="0" stop-color="#f7f020"/><stop offset=".55" stop-color="#fbf8a0"/><stop offset="1" stop-color="#fff"/></linearGradient></defs>
<g transform="translate(14,249)"><path d="M-11 -10.500V11H-3Z" fill="#30e0e8"/><path d="M-9.500 0L0.500 -10L9.500 -2.500Q12 5 6.500 9.500H-1Z" fill="url(#ylw)" stroke="#000" stroke-width="1.500"/></g>
<g transform="translate(14,280)"><path d="M-10.500 -1.500H-3L1.500 3.500L-5 7.500H-10.500Z" fill="#f0a020"/><path d="M-10.500 3L-6 8.500H8.500L4.500 5.500H-4Z" fill="#c07010"/><path d="M-4.500 6.500L-2 2L7 -7.500L10.500 -4.500L1.500 4.500Z" fill="#e8e8f4" stroke="#12206e" stroke-width="0.800"/><path d="M3.500 -3.500L7 -7.500L10.500 -4.500L7 -1Z" fill="#1a3ac0"/><path d="M-4.500 6.500L-2 2L1.500 4.500Z" fill="#222"/></g>
<g transform="translate(15,310)"><path d="M-8 4L-3 -4H3L8 4L0 8.500Z" fill="#18c838"/><path d="M-8 4L0 8.500V4Z" fill="#0a8a22"/><ellipse cx="0" cy="-4.500" rx="3" ry="1.800" fill="#f2ea40" stroke="#555" stroke-width="0.600"/></g>
<g transform="translate(14.5,340)"><rect x="-3" y="-11.500" width="5.500" height="20" fill="#fff" stroke="#000" stroke-width="1.200"/><path d="M-3 0L2.500 -4M-3 4L2.500 0M-3 8L2.500 4" stroke="#000" stroke-width="1.700"/><path d="M2.500 -11.500V8.500" stroke="#000" stroke-width="1.800"/></g>
<text x="5" y="348" font-family="Liberation Sans,sans-serif" font-weight="bold" font-size="6.500" fill="#c03040">N</text><text x="19.500" y="348" font-family="Liberation Sans,sans-serif" font-weight="bold" font-size="6.500" fill="#c03040">C</text>
<g transform="translate(14,376)"><rect x="-7.500" y="-6.500" width="7.500" height="7.500" fill="#f4f4f4" stroke="#0a1a3a" stroke-width="1.200"/></g>
<g transform="translate(15.5,378)"><circle cx="-0.500" cy="-0.500" r="4.600" fill="#8eeaf0" stroke="#0a1a6a" stroke-width="1.400"/><path d="M3 3L7 7" stroke="#a0108a" stroke-width="2.400"/><circle cx="-1" cy="0" r="1.300" fill="#0a1a3a"/></g>
<g transform="translate(13.5,406)"><circle cx="-0.500" cy="-0.500" r="4.600" fill="#8eeaf0" stroke="#0a1a6a" stroke-width="1.400"/><path d="M3 3L7 7" stroke="#a0108a" stroke-width="2.400"/><path d="M3.500 -6.500H9" stroke="#0a1a3a" stroke-width="1.300"/></g>
<g transform="translate(13.5,434)"><circle cx="-0.500" cy="-0.500" r="4.600" fill="#8eeaf0" stroke="#0a1a6a" stroke-width="1.400"/><path d="M3 3L7 7" stroke="#a0108a" stroke-width="2.400"/><path d="M4 -6H9.500M6.800 -8.800V-3.200" stroke="#0a1a3a" stroke-width="1.300"/></g>
<text x="10.500" y="460.500" font-family="Liberation Sans,sans-serif" font-size="9.500" fill="#9c9c9c">Z</text><text x="11.500" y="468.500" font-family="Liberation Sans,sans-serif" font-size="14" fill="#9c9c9c">Z</text>
<g transform="translate(14,461.5)"><path d="M-7.500 0V6.500H-3.500M2 -9L5.500 -6.500L2.500 -4" fill="none" stroke="#9c9c9c" stroke-width="1"/></g>
<g transform="translate(13.5,489)"><path d="M-8 0Q0 -7 8 0Q0 7 -8 0Z" fill="#fff" stroke="#0a1a6a" stroke-width="1.600"/><circle cx="0" cy="0" r="3.200" fill="#38d8f0" stroke="#0a1a6a" stroke-width="1.200"/><path d="M-6 -4.500L-7 -7M-3 -6L-3.500 -8.500M0 -6.500V-9M3 -6L3.500 -8.500M6 -4.500L7 -7" stroke="#0a1a6a" stroke-width="1"/><path d="M-7.500 1.500Q0 8.500 7.500 1.500Q0 6 -7.500 1.500Z" fill="#0a1a6a"/></g>
<g transform="translate(14,517)"><circle cx="0" cy="-1" r="5.500" fill="#dff8fa" stroke="#0a1a6a" stroke-width="1.200" stroke-dasharray="1.500 1.200"/><path d="M4 3L8 7" stroke="#a0108a" stroke-width="2"/><path d="M-1 -3V1M-1 -1H1" stroke="#0a1a6a" stroke-width="1"/><path d="M-8.500 2V6.500H-4" stroke="#e0206a" stroke-width="1.600" fill="none"/><path d="M-9.500 7.500H-5" stroke="#e0206a" stroke-width="1.400"/></g>
<g transform="translate(13.5,551.5)"><path d="M-7.500 0H7.500M0 -7.500V7.500" stroke="#000" stroke-width="1.500"/><path d="M-8.500 0L-5 -3V3ZM8.500 0L5 -3V3ZM0 -8.500L-3 -5H3ZM0 8.500L-3 5H3Z" fill="#000"/></g>
<g transform="translate(13.5,578)"><circle r="6" fill="#fff" stroke="#000" stroke-width="1.400"/><path d="M0 -3.500V3.500" stroke="#000" stroke-width="1.200"/><path d="M0 -4.500L-2 -2H2ZM0 4.500L-2 2H2Z" fill="#000"/><path d="M4.500 4.500L8.500 9" stroke="#109a8a" stroke-width="2.400"/></g>
<g transform="translate(13.5,607)"><path d="M-6.500 -1.500A6.500 6.500 0 0 1 4.500 -5M6.500 1.500A6.500 6.500 0 0 1 -4.500 5" fill="none" stroke="#000" stroke-width="1.500"/><path d="M6.500 -7.500V-2H1ZM-6.500 7.500V2H-1Z" fill="#000"/></g>
</svg>
<svg width="1045" height="768" viewBox="0 0 1045 768" fill="none">
<path d="M4.500 718V744" stroke="#a0a0a0"/><path d="M5.500 718V744" stroke="#fff"/>
<rect x="7.5" y="717.500" width="28.5" height="26" fill="#c5dcf3"/>
<rect x="65.5" y="717.500" width="28.5" height="26" fill="#c5dcf3"/>
<rect x="94.5" y="717.500" width="28.5" height="26" fill="#c5dcf3"/>
<rect x="123.5" y="717.500" width="28.5" height="26" fill="#c5dcf3"/>
<rect x="152.5" y="717.500" width="28.5" height="26" fill="#c5dcf3"/>
<rect x="245.5" y="717.500" width="29.0" height="26" fill="#c5dcf3"/>
<rect x="274.5" y="717.500" width="29.0" height="26" fill="#c5dcf3"/>
<path d="M94.2 717.500V743.500" stroke="#aecbea" stroke-width="0.800"/>
<path d="M123.2 717.500V743.500" stroke="#aecbea" stroke-width="0.800"/>
<path d="M152.2 717.500V743.500" stroke="#aecbea" stroke-width="0.800"/>
<path d="M274.5 717.500V743.500" stroke="#aecbea" stroke-width="0.800"/>
<g transform="translate(21,730.5)"><path d="M-4.500 4L4 -4" stroke="#12206e" stroke-width="1.400"/><circle cx="-5.500" cy="5" r="1.700" fill="none" stroke="#12206e" stroke-width="1.200"/><circle cx="5" cy="-5" r="1.700" fill="none" stroke="#12206e" stroke-width="1.200"/></g>
<g transform="translate(51,730.5)"><path d="M-9 -5.500H-2Q2.500 -4.500 2.800 0V6.500" fill="none" stroke="#000" stroke-width="1.300"/><rect x="-0.500" y="-4.500" width="2.800" height="2.800" fill="#ddd" stroke="#000" stroke-width="0.800"/><path d="M8 -9L3.500 -4.500M3.500 -8V-4.500H7M-8 6.500L-2 0.500M-2 4.500V0.500H-6" fill="none" stroke="#12206e" stroke-width="1.200"/></g>
<g transform="translate(80,730.5)"><path d="M-8 -5.500H-1M3.500 -0.500Q4.500 3 4.500 7" fill="none" stroke="#000" stroke-width="1.400"/><rect x="0" y="-4.500" width="3" height="3" fill="#ffd0b0" stroke="#d04010" stroke-width="1"/></g>
<g transform="translate(109,731)"><path d="M-7 6.500L7 -6.500M-7 -4L7 4.500" stroke="#000" stroke-width="1.300"/><rect x="-1.800" y="-1.800" width="3.600" height="3.600" fill="#c5dcf3" stroke="#000" stroke-width="1"/></g>
<g transform="translate(138,730.5)"><path d="M-5.500 -6H-1.500Q5.500 -5.500 6.500 5.500" fill="none" stroke="#000" stroke-width="1.400"/><path d="M-5.500 -5V3M-3.500 5H6" stroke="#12206e" stroke-width="1" stroke-dasharray="1 1.400"/><circle cx="-5.500" cy="5" r="1.700" fill="none" stroke="#12206e" stroke-width="1.200"/></g>
<g transform="translate(166.5,730.5)"><path d="M0 -6.500Q5.500 -5.500 6.500 0Q5.500 5.500 0 6.500Q-5.500 5.500 -6.500 0Q-5.500 -5.500 0 -6.500Z" fill="none" stroke="#000" stroke-width="1.400"/><circle cx="0" cy="-6.3" r="1.600" fill="#ffd0d0" stroke="#c01020" stroke-width="1"/><circle cx="6.3" cy="0" r="1.600" fill="#ffd0d0" stroke="#c01020" stroke-width="1"/><circle cx="0" cy="6.3" r="1.600" fill="#ffd0d0" stroke="#c01020" stroke-width="1"/><circle cx="-6.3" cy="0" r="1.600" fill="#ffd0d0" stroke="#c01020" stroke-width="1"/></g>
<g transform="translate(194,730.5)"><path d="M-0.500 -8.500V4.500M-8 4.500H10" stroke="#000" stroke-width="1.400"/><path d="M1.500 0.500H4.500V3" stroke="#e04060" stroke-width="0.900" stroke-dasharray="1 1" fill="none"/><circle cx="-0.500" cy="4.500" r="1.700" fill="#30c0a0" stroke="#054"/></g>
<g transform="translate(224,730.5)"><path d="M-8.500 -1Q2.500 -7 0.500 8" fill="none" stroke="#000" stroke-width="1.300"/><path d="M-6 -9L8.500 5.500" stroke="#000" stroke-width="1.300"/><circle cx="0" cy="-2.500" r="1.800" fill="#b02050" stroke="#601030" stroke-width="0.600"/></g>
<path d="M241 719V743" stroke="#a0a0a0" stroke-width="1"/><path d="M242 719V743" stroke="#fff" stroke-width="1"/>
<g transform="translate(259.5,731)"><rect x="-4" y="-4" width="8" height="8" rx="2.500" fill="#12206e"/><circle cx="0" cy="0" r="1.300" fill="#c5dcf3"/><rect x="-2.500" y="-2.500" width="1.800" height="1.800" fill="#c5dcf3"/><rect x="0.800" y="-2.500" width="1.800" height="1.800" fill="#c5dcf3"/><rect x="-2.500" y="0.800" width="1.800" height="1.800" fill="#c5dcf3"/><rect x="0.800" y="0.800" width="1.800" height="1.800" fill="#c5dcf3"/></g>
<g transform="translate(289,731.5)"><path d="M0 -1V-9M0 0L-5.500 5.500M0 0L5.500 5.500" stroke="#000" stroke-width="1.300"/><circle cx="0" cy="-0.500" r="1.500" fill="#fff" stroke="#000" stroke-width="0.900"/></g>
<text x="292.500" y="725.500" font-family="Liberation Sans,sans-serif" font-weight="bold" font-size="5.500" fill="#000">z</text><text x="279" y="737" font-family="Liberation Sans,sans-serif" font-weight="bold" font-size="5.500" fill="#000">y</text><text x="295.500" y="737" font-family="Liberation Sans,sans-serif" font-weight="bold" font-size="5.500" fill="#000">x</text>
<path d="M305.5 719V743" stroke="#a0a0a0" stroke-width="1"/><path d="M306.5 719V743" stroke="#fff" stroke-width="1"/>
<g transform="translate(322.5,730.5)"><path d="M-9 0.500Q-6 -4.500 -1 -8.500L10 0.500L0 9Z" fill="none" stroke="#000" stroke-width="1.050"/><path d="M-5 -4.500L5 4.500M4.500 -4L-4.500 5" stroke="#000" stroke-width="1"/><circle cx="-2.5" cy="-3.5" r="1.900" fill="#b01848" stroke="#500a20" stroke-width="0.600"/></g>
<g transform="translate(351.5,730.5)"><path d="M-9 0.500Q-6 -4.500 -1 -8.500L10 0.500L0 9Z" fill="none" stroke="#000" stroke-width="1.050"/><path d="M-5 -4.500L5 4.500M4.500 -4L-4.500 5" stroke="#000" stroke-width="1"/><circle cx="3.5" cy="-5.5" r="1.900" fill="#b01848" stroke="#500a20" stroke-width="0.600"/></g>
<g transform="translate(380.5,730.5)"><path d="M-9 0.500Q-6 -4.500 -1 -8.500L10 0.500L0 9Z" fill="none" stroke="#000" stroke-width="1.050"/><path d="M-5 -4.500L5 4.500M4.500 -4L-4.500 5" stroke="#000" stroke-width="1"/><circle cx="0" cy="0" r="1.900" fill="#b01848" stroke="#500a20" stroke-width="0.600"/></g>
<path d="M399 719V743" stroke="#a0a0a0" stroke-width="1"/><path d="M400 719V743" stroke="#fff" stroke-width="1"/>
<g transform="translate(415,731)"><path d="M-5 -9V0H3" fill="none" stroke="#000" stroke-width="1.300"/><path d="M-7 3H7M-9 5.500H5.500M-10.500 8H4" stroke="#000" stroke-width="1.300"/><rect x="3" y="-1.500" width="3" height="3" fill="#fff" stroke="#c01020" stroke-width="1"/></g>
<g transform="translate(444,731)"><path d="M-5 -9V0H3" fill="none" stroke="#000" stroke-width="1.300"/><path d="M-7 3H7M-9 5.500H5.500M-10.500 8H4" stroke="#000" stroke-width="1.300"/><circle cx="-2" cy="0.500" r="2" fill="#d01848"/><path d="M8 -8.500L3 -3.500M3 -7.500V-3.500H7" fill="none" stroke="#1a2ac0" stroke-width="1.200"/></g>
<path d="M463 719V743" stroke="#a0a0a0" stroke-width="1"/><path d="M464 719V743" stroke="#fff" stroke-width="1"/>
<g transform="translate(480,730)"><path d="M-9 -4V8L-6 5.500L-4 10L-2 9L-4 4.500H0Z" fill="#000"/><path d="M1 -8L9 0M9 -8L1 0" stroke="#000" stroke-width="0.900"/><circle cx="5" cy="-4" r="1.600" fill="#fff" stroke="#a06000" stroke-width="1"/></g>
<g transform="translate(509,730)"><path d="M-9 -4V8L-6 5.500L-4 10L-2 9L-4 4.500H0Z" fill="#000"/><path d="M2 -7.500L8.500 -1M8.500 -7.500L2 -1" stroke="#d01828" stroke-width="2.200"/></g>
<path d="M526.5 719V743" stroke="#a0a0a0" stroke-width="1"/><path d="M527.5 719V743" stroke="#fff" stroke-width="1"/>
<g transform="translate(543.5,731)"><path d="M-10.500 3L-3 -3.500H10L3 5.500Z" fill="none" stroke="#000" stroke-width="1.200"/><path d="M-0.500 -9V1" stroke="#c01020" stroke-width="1"/><rect x="-2" y="-10.500" width="3" height="3" fill="#fff" stroke="#c01020" stroke-width="1"/><circle cx="-0.500" cy="2.500" r="1.900" fill="#b01848"/><path d="M5 -10V-3.500M3 -6L5 -3.500L7 -6" fill="none" stroke="#1a50c0" stroke-width="1.200"/></g>
<g transform="translate(572,731)"><path d="M-6.500 5L7.500 -8.500" stroke="#000" stroke-width="1.200"/><circle cx="-5.500" cy="4.500" r="1.900" fill="#e03070" stroke="#500a20" stroke-width="0.700"/><circle cx="3.500" cy="-4" r="1.600" fill="#f0a020" stroke="#500a20" stroke-width="0.700"/><path d="M-2 -9L-7.500 -3.500M-7.500 -7.500V-3.500H-3.500" fill="none" stroke="#1a2ac0" stroke-width="1.200"/></g>
<g transform="translate(601,730.5)"><rect x="-1" y="-8" width="9" height="14" fill="#fff" stroke="#555" stroke-width="1"/><path d="M1.500 -4H6M1.500 -1.500H6M1.500 1H6M1.500 3.500H6" stroke="#000" stroke-width="1"/><path d="M-9.500 -7.500L-1 1M-1 -7.500L-9.500 1" stroke="#000" stroke-width="0.900"/><circle cx="-5" cy="-3.200" r="1.600" fill="#ffe060" stroke="#a06000" stroke-width="0.900"/></g>
<g transform="translate(630,730.5)"><path d="M-6 -5.500L6 5.500M6 -5.500L-6 5.500" stroke="#d01828" stroke-width="3.400"/></g>
<path d="M646.500 718V745" stroke="#a0a0a0"/><path d="M647.500 718V745" stroke="#fff"/><path d="M651.500 718V745" stroke="#fff"/><path d="M652.500 718V745" stroke="#b8b8b8"/>
<g transform="translate(668.5,730.5)"><path d="M-5.500 0H5.500M0 -5.500V5.500" stroke="#000" stroke-width="1.400"/></g>
<g transform="translate(698,730.5)"><path d="M-7 -4.500V4.500M7 -4.500V4.500M-7 0H7" stroke="#000" stroke-width="1.300"/><path d="M-6.500 0L-3.500 -2.500M-6.500 0L-3.500 2.500M6.500 0L3.500 -2.500M6.500 0L3.500 2.500" stroke="#000" stroke-width="1"/></g>
<g transform="translate(728.5,730.5)"><path d="M-7.500 -3.500H1.500V8M-3 1H-3V8" fill="none" stroke="#000" stroke-width="1.300"/><path d="M-7.500 -7V-1M-7.500 -5.500H3.500V8M-7 -5.500L-4.500 -7.500M-7 -5.500L-4.500 -3.500M3.500 7.500L1.500 5M3.500 7.500L5.500 5" fill="none" stroke="#000" stroke-width="1"/></g>
<g transform="translate(756,731)"><rect x="-9" y="-3" width="13" height="10.500" fill="none" stroke="#000" stroke-width="1.300"/><path d="M-9 -8.500V-4.500M4 -8.500V-4.500M-9 -6.500H4M-8.500 -6.500L-6.500 -8M-8.500 -6.500L-6.500 -5M3.500 -6.500L1.500 -8M3.500 -6.500L1.500 -5" stroke="#000" stroke-width="1"/><path d="M6 -3H10.500M6 7.500H10.500M8.200 -3V7.500M8.200 -2.500L6.700 -0.500M8.200 -2.500L9.700 -0.500M8.200 7L6.700 5M8.200 7L9.700 5" stroke="#000" stroke-width="1"/></g>
<g transform="translate(784.5,731)"><path d="M-8 -9V7.500H9" fill="none" stroke="#000" stroke-width="1.400"/><path d="M-7.500 -4Q3 -3 4.500 7" fill="none" stroke="#000" stroke-width="1.100"/><path d="M-7.500 -4L-4.500 -6M-7.500 -4L-5 -1.500M4.500 7L2.500 4.500M4.500 7L6.500 4.500" stroke="#000" stroke-width="1"/></g>
<g transform="translate(814,730.5)"><path d="M0 8L-9 -1Q0 -13 9 -1Z" fill="none" stroke="#000" stroke-width="1.300"/><path d="M-4 4Q0 0 4 4" fill="none" stroke="#000" stroke-width="1"/><path d="M-4 4L-3.500 1.500M-4 4L-1.500 4M4 4L3.500 1.500M4 4L1.500 4" stroke="#000" stroke-width="1"/></g>
<path d="M829.500 718V745" stroke="#a0a0a0"/><path d="M830.500 718V745" stroke="#fff"/><path d="M834.500 718V745" stroke="#fff"/><path d="M835.500 718V745" stroke="#b8b8b8"/>
<g transform="translate(852,730.5)"><rect x="-9.500" y="-9" width="9" height="7.500" fill="none" stroke="#a4a4a4" stroke-width="1.100"/><rect x="1" y="2" width="8.500" height="7" fill="none" stroke="#a4a4a4" stroke-width="1.100"/><path d="M1 -6L7.500 0M7.500 -3.500V0H4" fill="none" stroke="#a4a4a4" stroke-width="1"/></g>
<g transform="translate(880.5,731)"><rect x="-9" y="-4.500" width="6" height="12.500" fill="none" stroke="#a4a4a4" stroke-width="1.100"/><rect x="3" y="-4.500" width="6" height="12.500" fill="none" stroke="#a4a4a4" stroke-width="1.100"/><path d="M0 -6.500V9.500M-6.500 -8.500H8M8 -8.500L5.500 -10.500M8 -8.500L5.500 -6.500" stroke="#a4a4a4" stroke-width="1"/></g>
<g transform="translate(909,732)"><rect x="-5.500" y="-5.500" width="11" height="11" fill="none" stroke="#a4a4a4" stroke-width="1.100"/><path d="M0 -8L8 0L0 8L-8 0Z" fill="none" stroke="#a4a4a4" stroke-width="1"/><path d="M-5 -10.500H6M6 -10.500L3.500 -12M6 -10.500L3.500 -9" stroke="#a4a4a4" stroke-width="1"/></g>
<g transform="translate(938,732)"><rect x="-9" y="-5" width="14" height="11" fill="none" stroke="#a4a4a4" stroke-width="1.100"/><path d="M-9 6L-5 -5H10L5 6" fill="none" stroke="#a4a4a4" stroke-width="1"/><path d="M-6 -10.500H6M6 -10.500L3.500 -12M6 -10.500L3.500 -9" stroke="#a4a4a4" stroke-width="1"/></g>
</svg>
<!-- scrollbar arrow, status, misc -->
<svg width="1045" height="768" viewBox="0 0 1045 768" fill="none">
<path d="M58.500 702.500L54 706.500L58.500 710.500" stroke="#b4b4b4" stroke-width="1.800"/>
<!-- title icon -->
<g transform="translate(12,11)">
<path d="M-8 0L-3 -4H3L8 2V7H-2L-8 3Z" fill="#4a4a4a"/>
<path d="M-8 0L-2 4V7L-8 3Z" fill="#222"/>
<path d="M-2 4H8V7H-2Z" fill="#6a6a6a"/>
<path d="M-1.500 -9L0.500 -2L-1 5H2.500L1.500 -2L3 -9" fill="#e8d0c0" stroke="#222" stroke-width="1.100"/>
<path d="M-3 -8.500H4" stroke="#111" stroke-width="1.300"/>
<path d="M0 1H2V5H0Z" fill="#c83a2a"/>
</g>
<!-- axis widget -->
<g stroke="#3e9e52" stroke-width="1.100">
<rect x="96.500" y="617.500" width="48" height="47.500"/>
<path d="M96.500 617.500V606M96.500 617L93.500 628M96.500 617L99.500 628" stroke="#5ac870"/>
</g>
<path d="M144 665.500L133 663M144 665.500L134 668.500" stroke="#d04040" stroke-width="1"/>

<text x="96.500" y="608.300" text-anchor="middle" font-family="Liberation Sans,sans-serif" font-size="14" fill="#5ac870" stroke="none">Y</text>
<text x="156" y="671.800" text-anchor="middle" font-family="Liberation Sans,sans-serif" font-size="17" fill="#e02828" stroke="none">X</text>
<!-- blue rect -->
<rect x="919" y="407.500" width="26" height="45.500" stroke="#2a22b0" stroke-width="1.200"/>
<!-- small red marks on art -->
<path d="M541 237.500H549M657.500 260V294" stroke="#d03030" stroke-width="1"/>
</svg>
<div class="abs" style="left:0;top:766px;width:1045px;height:2px;background:#000"></div>
<div class="abs" id="stxt" style="left:3px;top:751px;font-size:13.500px;line-height:15px;white-space:nowrap;">Select command tool: No selected object</div>
<div class="abs" style="left:955px;top:748px;width:1px;height:18px;background:#b0b0b0"></div>
<svg width="1045" height="768" viewBox="0 0 1045 768">
<text x="964.500" y="764" font-family="Liberation Sans,sans-serif" font-size="13.500" fill="#000" textLength="78" lengthAdjust="spacingAndGlyphs">784.12 147.98</text>
<path d="M959 758.500H1032" stroke="#b8a070" stroke-width="1.200"/>
<!-- LOGO -->
<g>
<rect x="953" y="687" width="32" height="50.500" rx="5" fill="#e8202a"/>
<text id="lgC1" transform="translate(960.200,736) scale(0.600,1)" font-family="Liberation Sans,sans-serif" font-weight="bold" font-size="55.500" fill="#fff" stroke="#fff" stroke-width="2.600">C</text>
<path d="M974.500 696V704M974.500 729.500V737.500M960 716.500H968.500" stroke="#e8202a" stroke-width="0.800"/>
<text id="lgN" transform="translate(986.300,735) scale(0.600,1)" font-family="Liberation Sans,sans-serif" font-weight="bold" font-size="52" fill="#2c4aa6" stroke="#2c4aa6" stroke-width="2">N</text>
<path d="M991 702L1005.500 733" stroke="#fff" stroke-width="0.900"/>
<text id="lgC2" transform="translate(1012.300,735.200) scale(0.570,1)" font-family="Liberation Sans,sans-serif" font-weight="bold" font-size="53.500" fill="#f6921e" stroke="#f6921e" stroke-width="2.200">C</text>
<path d="M1024.500 697V704M1024.500 729V736" stroke="#f0f0f0" stroke-width="0.800"/>
<path d="M997 690Q1001 678 1006.200 669.500" stroke="#e8202a" stroke-width="2.800" fill="none" stroke-linecap="round"/>
<path d="M998.500 693.500Q1005 680.500 1014 672.500" stroke="#2c4aa6" stroke-width="3.600" fill="none" stroke-linecap="round"/>
<path d="M999.500 695Q1005 687 1012.500 682.500" stroke="#f6921e" stroke-width="3.200" fill="none" stroke-linecap="round"/>
<path d="M994.500 690.500L996.300 696H1001.500L997.500 699.200L999 705L994.500 701.500L989.500 705L991.200 699.200L987.500 696H992.500Z" fill="#b39262"/>
<rect x="952" y="741.500" width="85.500" height="13.500" rx="6.700" fill="#2c4a98"/>
<text x="957" y="752.800" font-family="Liberation Serif,serif" font-weight="bold" font-size="13.500" fill="#fff" stroke="#fff" stroke-width="0.500" textLength="76" lengthAdjust="spacingAndGlyphs">Khomaucnc.vn</text>
</g>
</svg>

</body></html>
